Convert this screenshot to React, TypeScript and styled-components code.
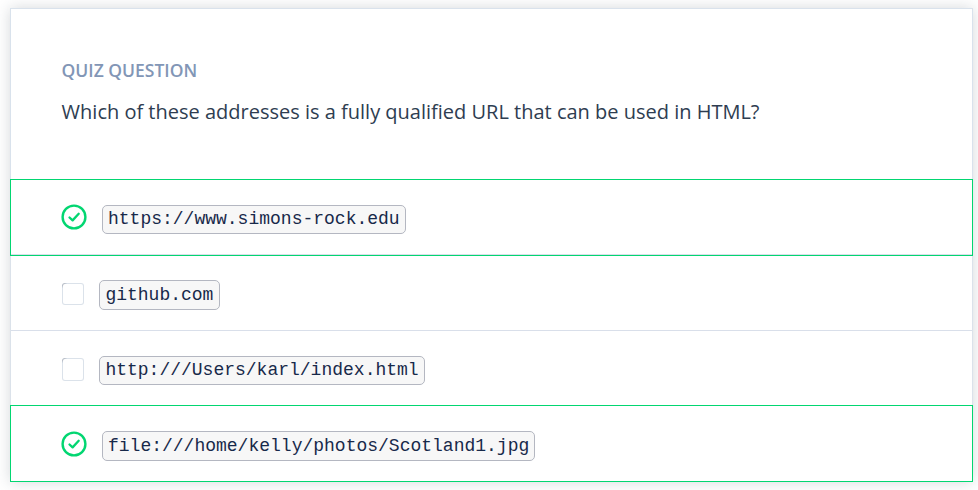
import React from "react";
import styled, { createGlobalStyle, css } from "styled-components";

const GlobalStyle = createGlobalStyle`
  *, *::before, *::after { box-sizing: border-box; }
  html, body { margin: 0; background: #fff; overflow: hidden; }
`;

const Page = styled.main`
  height: 490px;
  padding: 8px 5px 8px 10px;
  font-family: "Open Sans", sans-serif;
`;

const Card = styled.section`
  height: 474px;
  display: flex;
  flex-direction: column;
  background: #fff;
  box-shadow: 0 0 14px rgba(46, 61, 73, 0.2);
`;

const Header = styled.header`
  height: 171px;
  padding: 49px 50.6px 0;
  border: solid #d9e2ec;
  border-width: 1px 1px 0;
`;

const Eyebrow = styled.h1`
  margin: 0;
  font-size: 17.5px;
  line-height: 24px;
  font-weight: 600;
  color: #8296b6;
  white-space: nowrap;
`;

const Question = styled.p`
  margin: 15px 0 0;
  font-size: 20px;
  line-height: 30px;
  color: #2e3d51;
  white-space: nowrap;
`;

const Options = styled.ul`
  margin: 0;
  padding: 0;
  list-style: none;
`;

const Option = styled.li<{ $correct: boolean; $height: number; $pad: number; $line?: boolean }>`
  display: flex;
  align-items: flex-start;
  gap: 15px;
  height: ${(p) => p.$height}px;
  padding: ${(p) => p.$pad}px 50px 0;
  border: 1px solid #02d671;
  ${(p) =>
    !p.$correct &&
    css`
      border-color: #dbe2ea;
      border-width: 0 1px;
      padding-left: 51px;
    `}
  ${(p) => p.$line && css`box-shadow: inset 0 -1px #d9dfea;`}
`;

const CheckIcon = styled.svg<{ $drop: number }>`
  width: 26px;
  height: 26px;
  margin-top: ${(p) => p.$drop}px;
  flex: none;
`;

const Checkbox = styled.span<{ $height: number; $drop: number }>`
  width: 22px;
  height: ${(p) => p.$height}px;
  margin-top: ${(p) => p.$drop}px;
  flex: none;
  border: 1px solid transparent;
  border-radius: 3px;
  background:
    linear-gradient(#fff, #fff) padding-box,
    linear-gradient(135deg, #b4bac4 2px, #dbe2ea 4px) border-box;
`;

const Code = styled.code<{ $height: number; $correct: boolean }>`
  height: ${(p) => p.$height}px;
  padding: ${(p) => p.$height - 28}px ${(p) => (p.$correct ? 5 : 5.4)}px 0;
  border: 1px solid #b4b7c1;
  border-radius: 5px;
  background: #f7f7f7;
  color: #17294a;
  font: 18px/25px "Liberation Mono", monospace;
  white-space: nowrap;
`;

type Answer = {
  text: string;
  correct: boolean;
  height: number;
  pad: number;
  chip: number;
  drop: number;
  box?: number;
  line?: boolean;
};

const answers: Answer[] = [
  { text: "https://www.simons-rock.edu", correct: true, height: 77, pad: 25, chip: 29, drop: -1, line: true },
  { text: "github.com", correct: false, height: 75, pad: 24, chip: 30, drop: 3, box: 22, line: true },
  { text: "http:///Users/karl/index.html", correct: false, height: 74, pad: 25, chip: 29, drop: 2, box: 23 },
  { text: "file:///home/kelly/photos/Scotland1.jpg", correct: true, height: 77, pad: 25, chip: 30, drop: 0 },
];

export default function App() {
  return (
    <>
      <GlobalStyle />
      <Page>
        <Card>
          <Header>
            <Eyebrow>QUIZ QUESTION</Eyebrow>
            <Question>Which of these addresses is a fully qualified URL that can be used in HTML?</Question>
          </Header>
          <Options>
            {answers.map((a) => (
              <Option key={a.text} $correct={a.correct} $height={a.height} $pad={a.pad} $line={a.line}>
                {a.correct ? (
                  <CheckIcon $drop={a.drop} viewBox="0 0 26 26" fill="none" stroke="#02d671">
                    <circle cx="13" cy="13" r="11.4" strokeWidth="2.4" />
                    <path d="M8.5 13.5 11.6 16.4 17.7 9.8" strokeWidth="2.3" strokeLinecap="round" strokeLinejoin="round" />
                  </CheckIcon>
                ) : (
                  <Checkbox $height={a.box ?? 22} $drop={a.drop} />
                )}
                <Code $height={a.chip} $correct={a.correct}>{a.text}</Code>
              </Option>
            ))}
          </Options>
        </Card>
      </Page>
    </>
  );
}
